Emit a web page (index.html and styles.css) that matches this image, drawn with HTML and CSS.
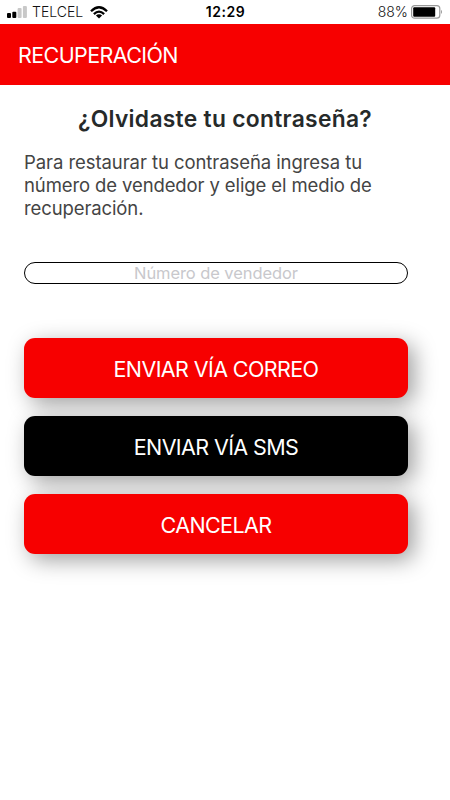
FILE: index.html
```html
<!DOCTYPE html>
<html lang="es">
<head>
<meta charset="utf-8">
<title>Recuperación</title>
<link rel="stylesheet" href="styles.css">
</head>
<body>
<div class="status">
  <div class="carrier">
    <svg class="signal" width="20" height="12" viewBox="0 0 20 12"><rect x="0" y="7" width="4" height="5" rx="1"/><rect x="5.3" y="5.8" width="4" height="6.2" rx="1"/><g fill="#c8c8c8"><rect x="10.6" y="2" width="4" height="10" rx="1"/><rect x="15.9" y="0" width="4" height="12" rx="1"/></g></svg>
    <span class="operator">TELCEL</span>
    <svg class="wifi" width="18" height="13" viewBox="0 0 18 13"><g fill="none" stroke="#000" stroke-width="2.3"><path d="M1 5.2Q9-2.6 17 5.2"/><path d="M3.9 8.1Q9 3.2 14.1 8.1"/></g><path d="M5.9 9.5Q9 6.9 12.1 9.5L9 12.6Z"/></svg>
  </div>
  <span class="time">12:29</span>
  <div class="power">
    <span class="percent">88%</span>
    <svg class="battery" width="32" height="14" viewBox="0 0 32 14"><rect x=".6" y=".6" width="28.2" height="12.6" rx="3" fill="none" stroke="#999" stroke-width="1.2"/><rect x="2.2" y="2.2" width="22" height="9.5" rx="1"/><path d="M30 4.7Q32 6.9 30 9.1Z" fill="#999"/></svg>
  </div>
</div>
<header class="bar"><span class="bar-title">RECUPERACIÓN</span></header>
<main class="content">
  <h1 class="heading">¿Olvidaste tu contraseña?</h1>
  <p class="intro"><span class="intro-lead">Para restaurar tu contraseña ingresa tu</span><br>número de vendedor y elige el medio de<br>recuperación.</p>
  <input class="seller" type="text" placeholder="Número de vendedor">
  <div class="actions">
    <button class="btn">ENVIAR VÍA CORREO</button>
    <button class="btn btn-dark">ENVIAR VÍA SMS</button>
    <button class="btn">CANCELAR</button>
  </div>
</main>
</body>
</html>
```

FILE: styles.css
```css
* { box-sizing: border-box; }
body {
  margin: 0;
  height: 800px;
  overflow: hidden;
  background: #fff;
  font-family: Inter, "Liberation Sans", sans-serif;
}
.status {
  display: grid;
  grid-template-columns: 1fr auto 1fr;
  align-items: center;
  height: 24px;
  padding: 0 7px;
  font-size: 14px;
  line-height: 24px;
  color: #111;
}
.carrier, .power { display: flex; align-items: center; }
.power { justify-content: flex-end; }
.operator { margin-left: 5px; font-weight: 300; }
.wifi { margin-left: 7px; }
.time { margin-left: 1px; font-weight: 600; letter-spacing: 0.5px; color: #000; }
.percent { font-weight: 300; margin-right: 3px; }
.bar {
  display: flex;
  align-items: center;
  height: 61.3px;
  padding: 1px 18px 0;
  background: #f70000;
  color: #fff;
  font-size: 21.5px;
  font-weight: 400;
}
.bar-title { letter-spacing: -0.6px; }
.content { padding: 19.7px 42px 0 24px; }
.heading {
  margin: 0 -18px 0 0;
  width: 402px;
  text-align: center;
  white-space: nowrap;
  font-size: 22.8px;
  line-height: 28px;
  font-weight: 600;
  letter-spacing: 0.3px;
  color: #262a2a;
}
.intro {
  margin: 18px 0 0;
  white-space: nowrap;
  font-size: 18.5px;
  line-height: 23px;
  font-weight: 400;
  letter-spacing: -0.11px;
  color: #444;
}
.intro-lead { letter-spacing: -0.07px; }
.seller {
  display: block;
  width: 384px;
  height: 22px;
  margin: 42px 0 0;
  padding: 0;
  border: 1px solid #000;
  border-radius: 11px;
  background: #fff;
  text-align: center;
  font: 400 16.5px/20px Inter, "Liberation Sans", sans-serif;
  letter-spacing: -0.08px;
}
.seller::placeholder { color: #c8c8cc; opacity: 1; }
.actions {
  display: flex;
  flex-direction: column;
  gap: 18px;
  margin-top: 54.5px;
}
.btn {
  height: 60px;
  padding: 2px 0 0;
  border: 0;
  border-radius: 11px;
  background: #f70000;
  box-shadow: 6px 6px 22px rgba(0, 0, 0, .38);
  color: #fff;
  font: 400 21.5px/26px Inter, "Liberation Sans", sans-serif;
  letter-spacing: -0.6px;
}
.btn-dark { background: #000; }
```
